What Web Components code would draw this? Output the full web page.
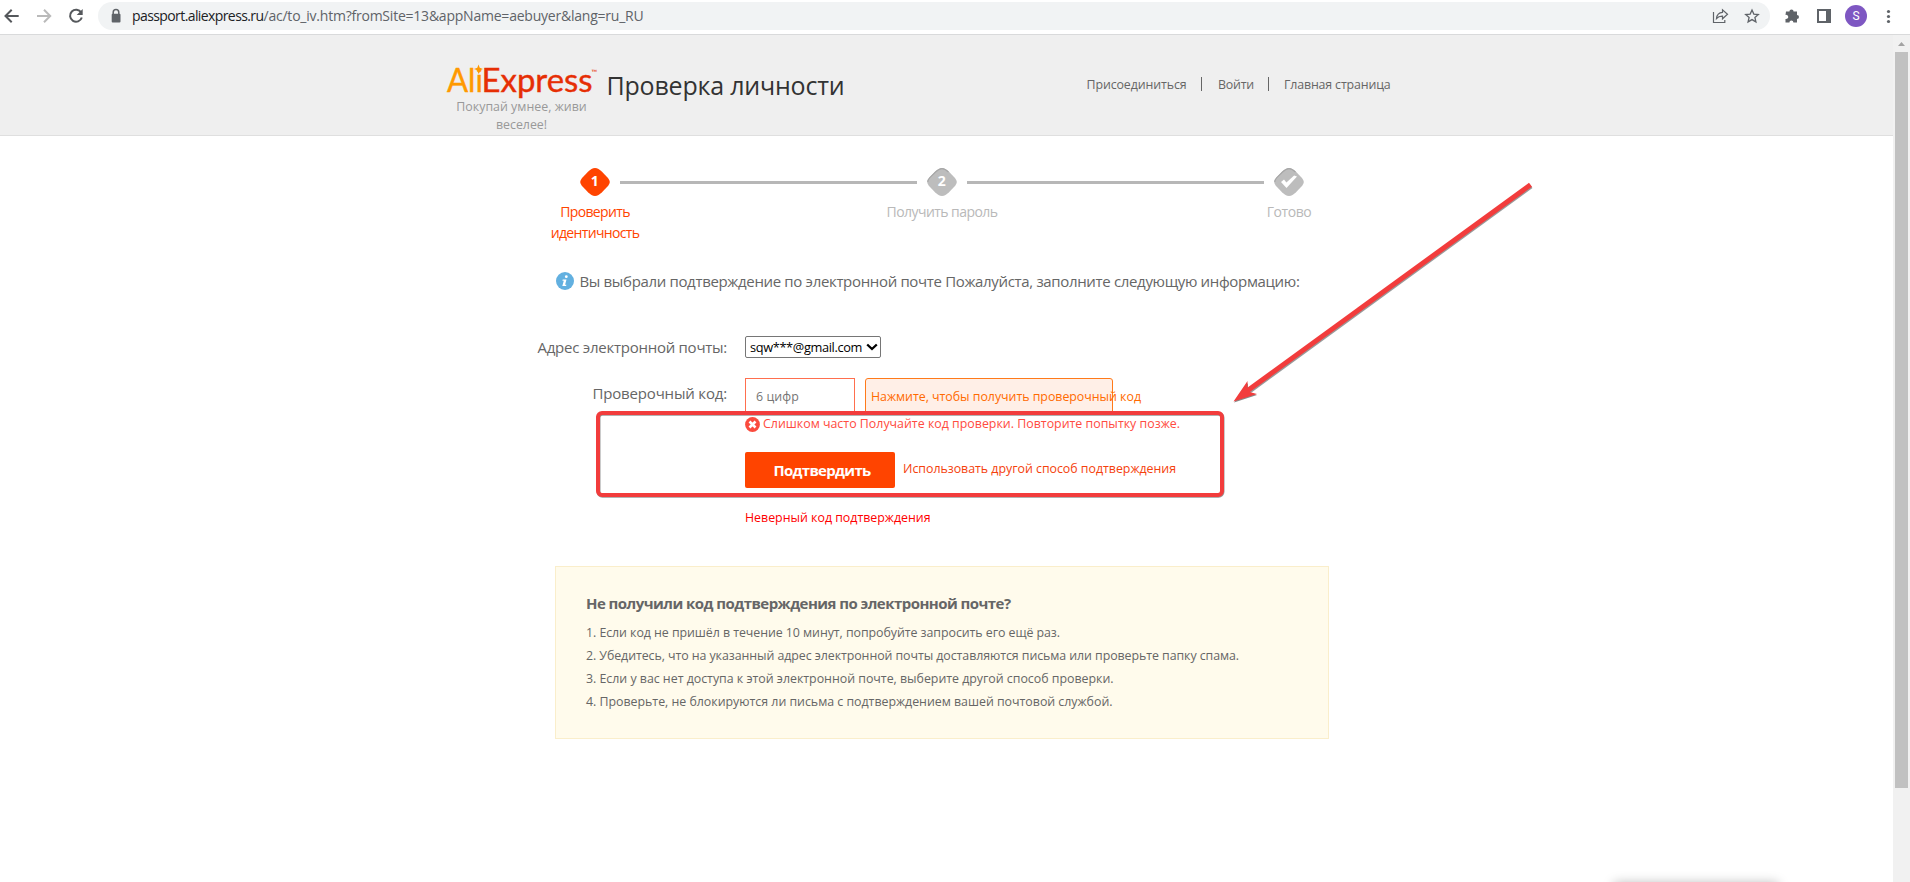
<!DOCTYPE html>
<html lang="ru">
<head>
<meta charset="utf-8">
<title>Проверка личности</title>
<style>
html,body{margin:0;height:100%;overflow:hidden;background:#fff}
body{font-family:"Open Sans","Noto Sans",sans-serif;color:#666}
</style>
</head>
<body>
<app-window></app-window>
<script>
function component(name, html, setup) {
  customElements.define(name, class extends HTMLElement {
    connectedCallback() {
      if (this.shadowRoot) return;
      this.attachShadow({ mode: 'open' }).innerHTML = html;
      if (setup) setup(this, this.shadowRoot);
    }
  });
}

component('app-window', `<style>
:host{display:flex;flex-direction:column;position:relative;width:1910px;height:882px;overflow:hidden}
.view{display:flex;flex:1;min-height:0}
main{flex:1;position:relative}
page-marks{position:absolute;left:0;top:0}
.popup{position:absolute;left:1615px;top:884px;width:162px;height:20px;box-shadow:0 0 12px 1px rgba(0,0,0,.28)}
</style>
<browser-bar></browser-bar>
<div class="view">
<main><site-header></site-header><step-progress></step-progress><info-line></info-line><verify-form></verify-form><help-notice></help-notice></main>
<scroll-bar></scroll-bar>
</div>
<page-marks></page-marks><div class="popup"></div>`);

component('browser-bar', `<style>
:host{display:flex;height:34px;border-bottom:1px solid #d9dadb;background:#fff;box-sizing:content-box;flex:none;align-items:flex-start}
.nav{display:flex;width:98px}
.nav svg{display:block}
.omni{margin-top:2px;width:1672px;height:28px;border-radius:14px;background:#f1f3f4;display:flex;align-items:center}
.lock{margin-left:12px}
.url{margin-left:10px;font-size:14px;line-height:28px;height:28px;color:#5f6368;flex:1}
.url b{font-weight:400;color:#202124}
.tools{display:flex}
</style>
<div class="nav"><svg width="98" height="34" fill="none" stroke="#55585c" stroke-width="2">
<path d="M18.7 13H6M11.7 6.8L5.5 13l6.2 6.2" transform="translate(0 3)"/>
<path d="M37 16h12.7M44 9.8l6.2 6.2-6.2 6.2" stroke="#bababa"/>
<path d="M81.2 12.6A6 6 0 1 0 81.8 17.5"/><path d="M82.7 9v6h-6z" fill="#55585c" stroke="none"/></svg></div>
<div class="omni"><svg class="lock" width="12" height="16"><path d="M3.2 7V4.4a2.8 2.8 0 0 1 5.6 0V7" fill="none" stroke="#5f6368" stroke-width="1.5"/><rect x="1.7" y="5.8" width="8.8" height="8.6" rx="1" fill="#5f6368"/></svg>
<div class="url"><b><fit-text w="131.5">passport.aliexpress.ru</fit-text></b><fit-text w="380">/ac/to_iv.htm?fromSite=13&amp;appName=aebuyer&amp;lang=ru_RU</fit-text></div></div>
<div class="tools"><svg width="140" height="34" style="margin-left:0;overflow:visible">
<g fill="none" stroke="#5f6368" stroke-width="1.2"><path d="M-56.5 12v10.500h11.300V20"/><path d="M-53.500 18.500c.4-4.200 3-6 6-6.200V9.800l5 4.500-5 4.500v-2.600c-2.600-.1-4.400.5-6 2.300z"/>
<path d="M-18 10l1.800 4.100 4.500.4-3.400 3 1 4.400-3.900-2.300-3.900 2.300 1-4.400-3.400-3 4.500-.4z" stroke-width="1.3"/></g>
<path d="M16 11.500h3.400a2.100 2.100 0 1 1 4.200 0h3.400v3.600a2 2 0 1 1 0 4v3.500h-3.600a2 2 0 1 0-4 0h-3.900v-3.700a2.100 2.100 0 1 0 0-4z" fill="#5f6368"/>
<path d="M47 9h14v14H47zM49 11v10h7V11z" fill="#5f6368" fill-rule="evenodd"/>
<circle cx="86" cy="16" r="11" fill="#7e57c2"/><text x="86" y="20.300" text-anchor="middle" font-size="12" fill="#fff" font-family="Roboto,sans-serif">S</text>
<g fill="#5f6368"><circle cx="118.500" cy="11.500" r="1.600"/><circle cx="118.500" cy="16.500" r="1.600"/><circle cx="118.500" cy="21.500" r="1.600"/></g></svg></div>`);

component('scroll-bar', `<style>
:host{display:flex;flex-direction:column;align-items:center;width:17px;background:#f1f1f1}
svg{display:block;height:17px}.thumb{width:13px;height:736px;background:#c1c1c1}
</style><svg width="17" height="17"><path d="M5 11l3.500-4 3.500 4z" fill="#a3a3a3"/></svg><div class="thumb"></div>`);

component('site-header', `<style>
:host{display:flex;height:100px;background:#efefef;border-bottom:1px solid #dfdfdf}
.brand{margin:29px 0 0 446px;width:151px}
.brand svg{display:block;overflow:visible}
.slogan{font-size:12.400px;line-height:18px;color:#999;text-align:center;margin-top:-2px;width:151px}
h1{margin:33px 0 0 9.500px;font-size:25px;font-weight:400;line-height:34px;color:#333;width:238px}
nav{display:flex;margin:40px 0 0 242px;font-size:12.400px;line-height:20px;height:20px}
i{width:1px;height:14px;background:#666;margin:2px 16px 0 15px}
</style>
<div class="brand"><svg width="151" height="36" font-family="Lato,sans-serif" font-size="32.500" stroke-width=".4">
<text x="1" y="27.500" textLength="36" lengthAdjust="spacingAndGlyphs" fill="#ff9900" stroke="#ff9900">Ali</text>
<text x="35.500" y="27.500" textLength="111" lengthAdjust="spacingAndGlyphs" fill="#e62e04" stroke="#e62e04">Express</text>
<path d="M32.500.5l1.200 3.300L37 5l-3.300 1.200-1.200 4-1.200-4L28 5l3.300-1.200z" fill="#ff9900"/>
<text x="145.500" y="10.500" font-size="7.500" fill="#e62e04">™</text></svg>
<div class="slogan"><fit-text w="130.500">Покупай умнее, живи</fit-text><br><fit-text w="51">веселее!</fit-text></div></div>
<h1><fit-text w="238">Проверка личности</fit-text></h1>
<nav><fit-text w="100">Присоединиться</fit-text><i style="margin-left:14.500px"></i><fit-text w="36">Войти</fit-text><i style="margin-left:14px;margin-right:15px"></i><fit-text w="106.500">Главная страница</fit-text></nav>`);

component('step-progress', `<style>
:host{display:flex;margin:31px 0 0 530px;height:82px}
hr{margin:14px -40px 0;border:0;height:3px;width:297px;background:#b7b7b7;flex:none}
</style>
<step-item n="1" active><fit-text w="69.500">Проверить</fit-text><br><fit-text w="88.500">идентичность</fit-text></step-item><hr>
<step-item n="2"><fit-text w="111">Получить пароль</fit-text></step-item><hr>
<step-item n="✓"><fit-text w="44.500">Готово</fit-text></step-item>`);

component('step-item', `<style>
:host{display:flex;flex-direction:column;align-items:center;width:130px;flex:none;color:#b9b9b9;font-size:14px;line-height:21px;text-align:center;--c:#bdbdbd}
:host([active]){color:#ff4400;--c:#ff4400}
svg{display:block;margin-top:1px}.l{margin-top:3.500px;white-space:nowrap}
</style><svg width="30" height="29"><path d="M15 0C17.500 0 19.500 1.500 22 3.800L27.500 9.500c3 3.500 3 5.500 0 9l-5.500 5.700c-2.500 2.300-4.500 3.800-7 3.800s-4.500-1.500-7-3.800L2.500 18.500C-.5 15-.5 13 2.500 9.500L8 3.800C10.500 1.500 12.500 0 15 0z" fill="var(--c)"/><g class="g"></g></svg><div class="l"><slot></slot></div>`,
(host, root) => {
  const n = host.getAttribute('n');
  if (!host.hasAttribute('active'))
    root.querySelector('svg > path').insertAdjacentHTML('afterend', '<path d="M.8 14c0-1.500.7-3 2-4.300L8.500 4C11 1.700 13 .6 15 .6s4 1.100 6.500 3.400" fill="none" stroke="#a6a6a6" stroke-width="1.100"/>');
  root.querySelector('.g').innerHTML = n === '✓'
    ? '<path d="M7 14l3-2.500 2.400 2.900 7.700-7 2.900 1-10.500 11.600z" fill="#fff"/>'
    : '<text x="14.800" y="17.800" text-anchor="middle" font-size="14" font-weight="700" fill="#fff" font-family="Noto Sans,DejaVu Sans">' + n + '</text>';
});

component('info-line', `<style>
:host{display:flex;align-items:center;margin:20px 0 1px 555.500px;height:24px;font-size:15px;line-height:24px}
svg{margin-right:6px;flex:none}
</style><svg width="18" height="18"><circle cx="9" cy="9" r="9" fill="#62b0e0"/><circle cx="10.300" cy="4.700" r="1.400" fill="#fff"/><path d="M6.700 7.500h3.800l-1.400 5.300h1.300l-.3 1.200H6.300l1.500-5.200H6.400z" fill="#fff"/></svg><fit-text w="720">Вы выбрали подтверждение по электронной почте Пожалуйста, заполните следующую информацию:</fit-text>`);

component('verify-form', `<style>
:host{display:flex;flex-direction:column;height:272px;padding-left:527px;font-size:12.400px}
.row{display:flex;height:40px}
label{width:200px;margin-right:18px;text-align:right;font-size:15px;line-height:24px;flex:none;white-space:nowrap}
.sel{display:flex;align-items:center;width:134px;height:20px;border:1px solid #767676;border-radius:2px;color:#000;font-size:12.800px;line-height:20px;background:#fff}
.sel fit-text{margin-left:4px}.sel svg{margin-left:4px}
.in{width:98px;height:35px;border:1px solid #ff6f4e;padding-left:10px;line-height:35px;color:#757575;margin-right:10px}
.get{width:241px;height:35px;border:1px solid #ff7a1a;border-radius:3px;background:#ffefe7;color:#ff6a00;padding-left:5px;line-height:35px;white-space:nowrap}
.err{display:flex;align-items:center;margin-left:218px;height:20px;line-height:20px;color:#ff4c41;gap:3px;position:relative}
.err svg{margin-bottom:1px}.err fit-text{margin-top:-2px}
.act{display:flex;margin:17px 0 0 218px;height:36px;color:#f5410c;line-height:34px}
button{width:150px;height:36px;border:0;border-radius:2px;background:#ff4400;color:#fff;font:700 15px/36px "Open Sans",sans-serif;padding:0 0 0 4px;margin-right:8px}
.bad{margin:20px 0 0 218px;line-height:20px;color:#f00}
</style>
<div class="row" style="margin-top:42px"><label style="margin-top:-1px"><fit-text w="189.500">Адрес электронной почты:</fit-text></label><div class="sel"><fit-text w="112">sqw***@gmail.com</fit-text><svg width="12" height="8"><path d="M1.200 1.500L6 6l4.800-4.500" fill="none" stroke="#000" stroke-width="2.300"/></svg></div></div>
<div class="row" style="margin-top:2px;height:37px"><label style="padding-top:3px"><fit-text w="134.500">Проверочный код:</fit-text></label><div class="in"><fit-text w="43">6 цифр</fit-text></div><div class="get"><fit-text w="270">Нажмите, чтобы получить проверочный код</fit-text></div></div>
<div class="err"><svg width="15" height="15"><circle cx="7.500" cy="7.500" r="7.400" fill="#fa4b3e"/><path d="M4.500 4.500l6 6m0-6l-6 6" stroke="#fff" stroke-width="2.600"/></svg><fit-text w="417">Слишком часто Получайте код проверки. Повторите попытку позже.</fit-text></div>
<div class="act"><button><fit-text w="97">Подтвердить</fit-text></button><fit-text w="273">Использовать другой способ подтверждения</fit-text></div>
<div class="bad"><fit-text w="185.500">Неверный код подтверждения</fit-text></div>`);

component('help-notice', `<style>
:host{display:block;box-sizing:border-box;width:774px;height:173px;margin-left:555px;border:1px solid #faeecb;background:#fffbec;padding:24px 30px;font-size:12.400px;line-height:23px}
h2{margin:0 0 6px;font-size:15px;line-height:24px;font-weight:700}
p{margin:0;white-space:nowrap;height:23px}
</style><h2><fit-text w="424.500">Не получили код подтверждения по электронной почте?</fit-text></h2>
<p><fit-text w="474">1. Если код не пришёл в течение 10 минут, попробуйте запросить его ещё раз.</fit-text></p>
<p><fit-text w="653">2. Убедитесь, что на указанный адрес электронной почты доставляются письма или проверьте папку спама.</fit-text></p>
<p><fit-text w="527.500">3. Если у вас нет доступа к этой электронной почте, выберите другой способ проверки.</fit-text></p>
<p><fit-text w="526.500">4. Проверьте, не блокируются ли письма с подтверждением вашей почтовой службой.</fit-text></p>`);

component('page-marks', `<style>:host{display:block;pointer-events:none}svg{display:block}</style>
<svg width="1910" height="882"><g fill="none" stroke="#777" opacity=".75"><rect x="598.500" y="413.800" width="624" height="82" rx="4" stroke-width="4"/><path d="M1531 186L1248 392" stroke-width="5"/></g>
<path d="M1234 402.500l14-19.500v9l9 3z" fill="#888"/>
<rect x="598" y="413" width="624" height="82" rx="4" fill="none" stroke="#f23c3c" stroke-width="4"/>
<path d="M1530.500 184.800L1247 391" stroke="#f23c3c" stroke-width="5"/><path d="M1233.500 401.500L1247.500 381v8.500l2 2.500 7.500 2z" fill="#f23c3c"/></svg>`);

/* Inline text run whose tracking is adjusted to the width given in "w". */
component('fit-text', `<style>:host{display:inline-block;white-space:pre;text-align:left}span{display:inline-block}</style><span><slot></slot></span>`,
(host, root) => {
  const span = root.querySelector('span');
  const w = parseFloat(host.getAttribute('w'));
  const n = host.textContent.length;
  span.style.letterSpacing = (w - span.getBoundingClientRect().width) / n + 'px';
  host.style.width = w + 'px';
});
</script>
</body>
</html>
